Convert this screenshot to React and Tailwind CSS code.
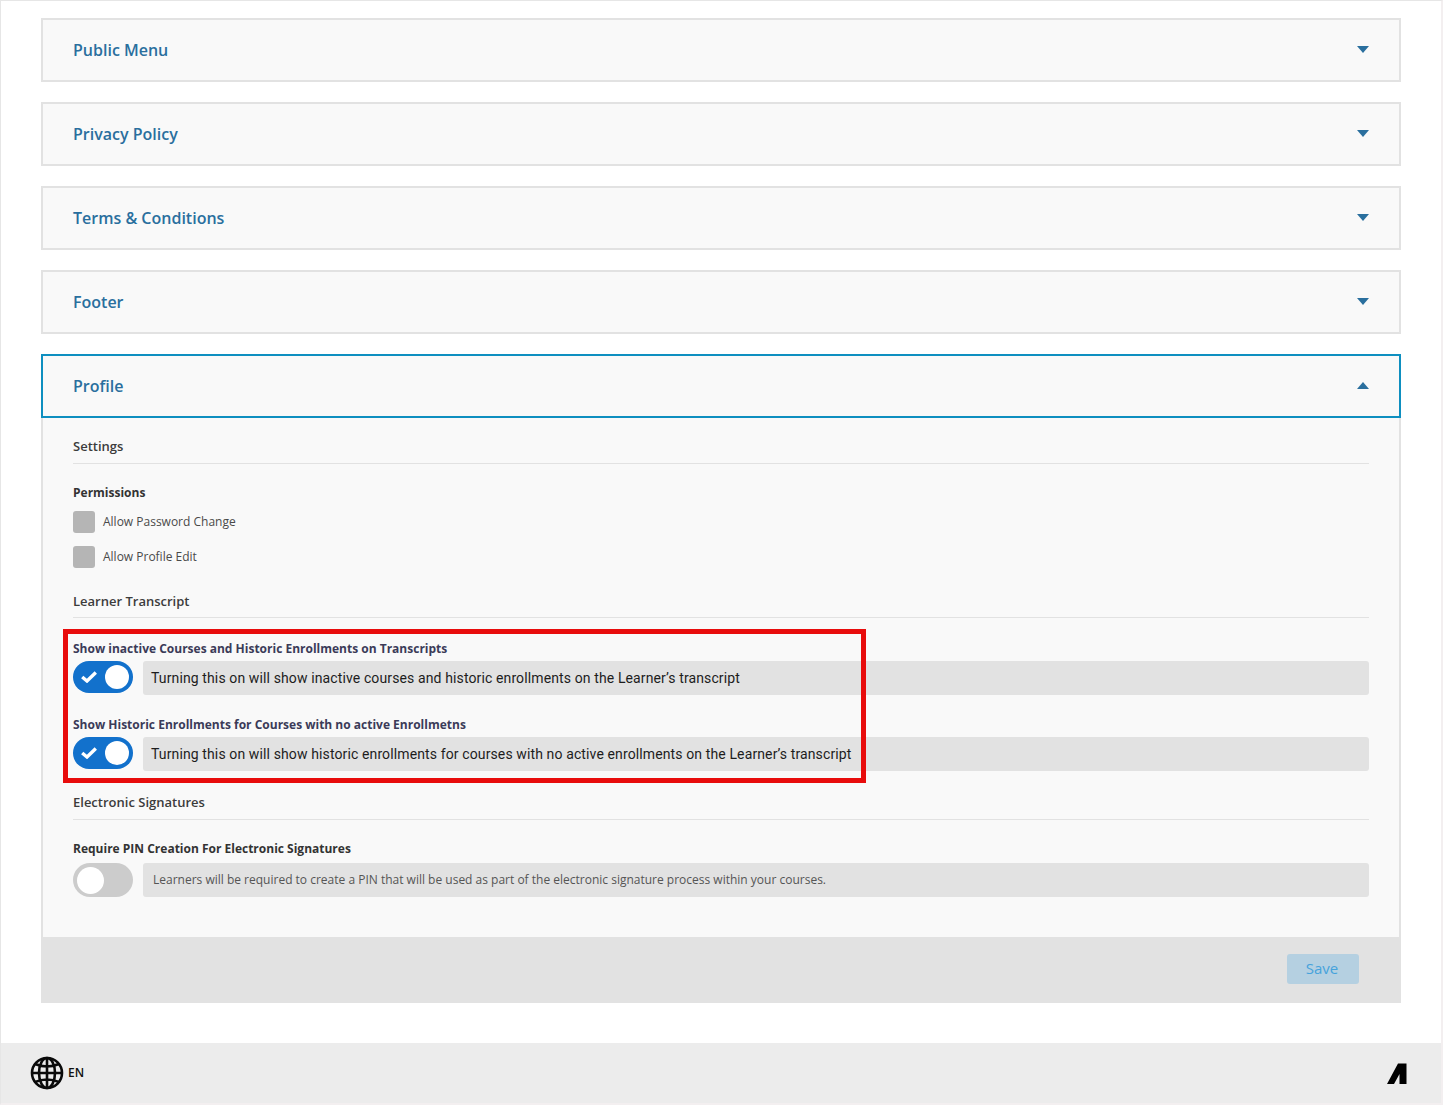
import React from 'react';

const Caret = ({ up }) => (
  <svg width="12" height="7" viewBox="0 0 12 7" className="fill-[#2a6f9e] mb-[2px]">
    <path d={up ? 'M0 7 L6 0 L12 7 Z' : 'M0 0 L6 7 L12 0 Z'} />
  </svg>
);

const Section = ({ title }) => (
  <div className="h-[64px] flex items-center justify-between px-[30px] bg-[#f9f9f9] border-2 border-[#e2e2e2]">
    <span className="text-[16px] font-semibold text-[#2a6f9e]">{title}</span>
    <Caret />
  </div>
);

const Heading = ({ children }) => (
  <div className="h-[30px] flex items-center text-[13px] font-semibold text-[#3c3c3c] border-b border-[#e2e2e2] pb-[3px]">
    {children}
  </div>
);

const Check = ({ label }) => (
  <div className="flex items-center gap-2 h-[22px]">
    <span className="w-[22px] h-[22px] rounded-[3px] bg-[#b5b5b5]" />
    <span className="text-[12px] text-[#4a4a4a]">{label}</span>
  </div>
);

const Toggle = ({ on }) =>
  on ? (
    <span className="w-[60px] h-[32px] shrink-0 rounded-full bg-[#1271cc] flex items-center justify-between pl-[8px] pr-[4px]">
      <svg width="16" height="12" viewBox="0 0 16 12" fill="none" stroke="#fff" strokeWidth="3.4">
        <path d="M1.2 6 L6 10 L14.8 1.6" />
      </svg>
      <span className="w-[24px] h-[24px] rounded-full bg-white" />
    </span>
  ) : (
    <span className="w-[60px] h-[34px] shrink-0 rounded-full bg-[#cccccc] flex items-center pl-[4px]">
      <span className="w-[27px] h-[27px] rounded-full bg-white" />
    </span>
  );

const ToggleRow = ({ label, text }) => (
  <div>
    <div className="h-[25px] flex items-center text-[12px] font-bold text-[#3b3b58]">{label}</div>
    <div className="flex items-start gap-[10px]">
      <Toggle on />
      <div className="flex-1 h-[34px] flex items-center pl-2 bg-[#e2e2e2] rounded-[3px] font-['Roboto',sans-serif] text-[14px] tracking-[0.12px] text-[#1d1d1d]">
        {text}
      </div>
    </div>
  </div>
);

export default function App() {
  return (
    <div className="w-[1443px] h-[1105px] flex flex-col bg-white font-['Open_Sans',sans-serif] border-t border-l border-r-2 border-b-2 border-[#e6e6e6] border-b-[#f3eff0] border-r-[#f3eff0]">
      <div className="flex-1 pt-[17px] pl-[40px] pr-[40px]">
        <div className="flex flex-col gap-[20px]">
          <Section title="Public Menu" />
          <Section title="Privacy Policy" />
          <Section title="Terms & Conditions" />
          <Section title="Footer" />
          <div>
            <div className="h-[64px] flex items-center justify-between px-[30px] bg-[#f9f9f9] border-2 border-[#0e8fc0]">
              <span className="text-[16px] font-semibold text-[#2a6f9e]">Profile</span>
              <Caret up />
            </div>
            <div className="h-[519px] bg-[#f9f9f9] border-x-2 border-[#e2e2e2] px-[30px] pt-[16px]">
              <Heading>Settings</Heading>
              <div className="h-[29px] mt-[14px] flex items-center text-[12px] font-bold text-[#333333]">Permissions</div>
              <div className="flex flex-col gap-[13px] mt-[4px]">
                <Check label="Allow Password Change" />
                <Check label="Allow Profile Edit" />
              </div>
              <div className="mt-[20px] h-[30px] flex items-center text-[13px] font-semibold text-[#3c3c3c] border-b border-[#e2e2e2] pb-[1px]">
                Learner Transcript
              </div>
              <div className="relative mt-[18px] flex flex-col gap-[17px]">
                <ToggleRow
                  label="Show inactive Courses and Historic Enrollments on Transcripts"
                  text="Turning this on will show inactive courses and historic enrollments on the Learner’s transcript"
                />
                <ToggleRow
                  label="Show Historic Enrollments for Courses with no active Enrollmetns"
                  text="Turning this on will show historic enrollments for courses with no active enrollments on the Learner’s transcript"
                />
                <div className="absolute left-[-10px] top-[-7px] w-[803px] h-[154px] border-[5px] border-[#e80c0c]" />
              </div>
              <div className="mt-[19px]">
                <Heading>Electronic Signatures</Heading>
              </div>
              <div className="h-[29px] mt-[14px] flex items-center text-[12px] font-bold text-[#333333]">
                Require PIN Creation For Electronic Signatures
              </div>
              <div className="flex items-start gap-[10px]">
                <Toggle />
                <div className="flex-1 h-[34px] flex items-center pl-[10px] bg-[#e2e2e2] rounded-[3px] text-[12px] text-[#555555]">
                  Learners will be required to create a PIN that will be used as part of the electronic signature process within your courses.
                </div>
              </div>
            </div>
            <div className="h-[66px] bg-[#e2e2e2] flex items-center justify-end pr-[42px] pb-[2px]">
              <button className="w-[72px] h-[30px] rounded-[3px] bg-[#b5d0e1] text-[15px] text-[#46a3dc] pb-[2px] pr-[2px]">Save</button>
            </div>
          </div>
        </div>
      </div>
      <div className="h-[60px] bg-[#ececec] flex items-center justify-between pl-[29px] pr-[34px]">
        <div className="flex items-center gap-[4px]">
          <svg width="34" height="34" viewBox="0 0 34 34" fill="none" stroke="#0a0a0a" strokeWidth="2.6">
            <circle cx="17" cy="17" r="15" />
            <ellipse cx="17" cy="17" rx="8" ry="15" />
            <path d="M17 2 V32 M2 17 H32 M5 8 Q17 13 29 8 M5 26 Q17 21 29 26" />
          </svg>
          <span className="text-[12px] font-semibold text-[#111111]">EN</span>
        </div>
        <svg width="20" height="21" viewBox="0 0 20 21" className="fill-black">
          <path d="M0 21 L11 0.5 H19.5 V21 H12.5 V11 L7 21 Z" />
        </svg>
      </div>
    </div>
  );
}
